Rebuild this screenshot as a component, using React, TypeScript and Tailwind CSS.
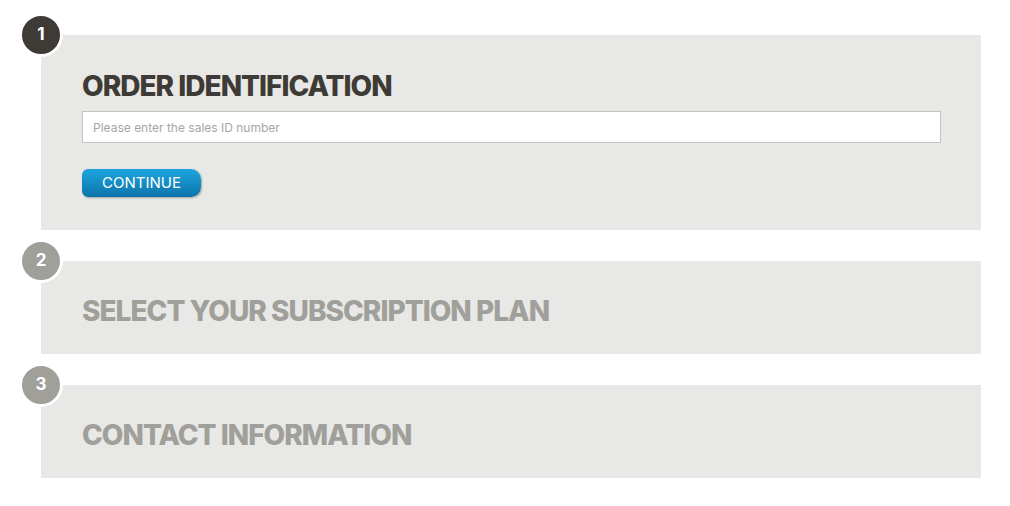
import React from "react";

const steps = [
  { n: 1, title: "SELECT YOUR SUBSCRIPTION PLAN" },
  { n: 2, title: "CONTACT INFORMATION" },
];

function Badge({ n, active }: { n: number; active?: boolean }) {
  return (
    <div
      className={`absolute -left-[22px] -top-[22px] flex h-[44px] w-[44px] items-center justify-center rounded-full border-[3px] border-white text-[17px] font-bold text-white ${
        active ? "bg-[#3e3a35]" : "bg-[#a09f9a]"
      }`}
    >
      {n}
    </div>
  );
}

export default function App() {
  return (
    <div
      className="min-h-[506px] w-[1010px] bg-white"
      style={{ fontFamily: "Inter, 'Liberation Sans', sans-serif" }}
    >
      <div className="flex w-[981px] flex-col gap-[31px] pl-[41px] pt-[35px]">
        <section className="relative h-[195px] bg-[#e8e9e6] px-[41px] pt-[34px]">
          <Badge n={1} active />
          <h1 className="text-[28px] font-extrabold leading-[34px] tracking-[-0.035em] text-[#3e3a35]">
            ORDER IDENTIFICATION
          </h1>
          <input
            type="text"
            placeholder="Please enter the sales ID number"
            className="mt-[8px] h-[32px] w-[859px] border border-[#c3c3c1] bg-white px-[10px] text-[12px] text-[#555] placeholder:text-[#a6a6a4] outline-none"
          />
          <button
            type="button"
            className="mt-[26px] flex h-[28px] w-[119px] items-center justify-center rounded-l-[6px] rounded-r-[10px] bg-gradient-to-b from-[#1ea5df] to-[#0c74aa] text-[15px] text-white shadow-[1px_1px_2px_rgba(0,0,0,0.3)]"
          >
            CONTINUE
          </button>
        </section>
        {steps.map((s) => (
          <section
            key={s.n}
            className="relative h-[93px] bg-[#e8e9e6] px-[41px] pt-[33px]"
          >
            <Badge n={s.n + 1} />
            <h2 className="text-[28px] font-extrabold leading-[34px] tracking-[-0.035em] text-[#a09f9a]">
              {s.title}
            </h2>
          </section>
        ))}
      </div>
    </div>
  );
}
